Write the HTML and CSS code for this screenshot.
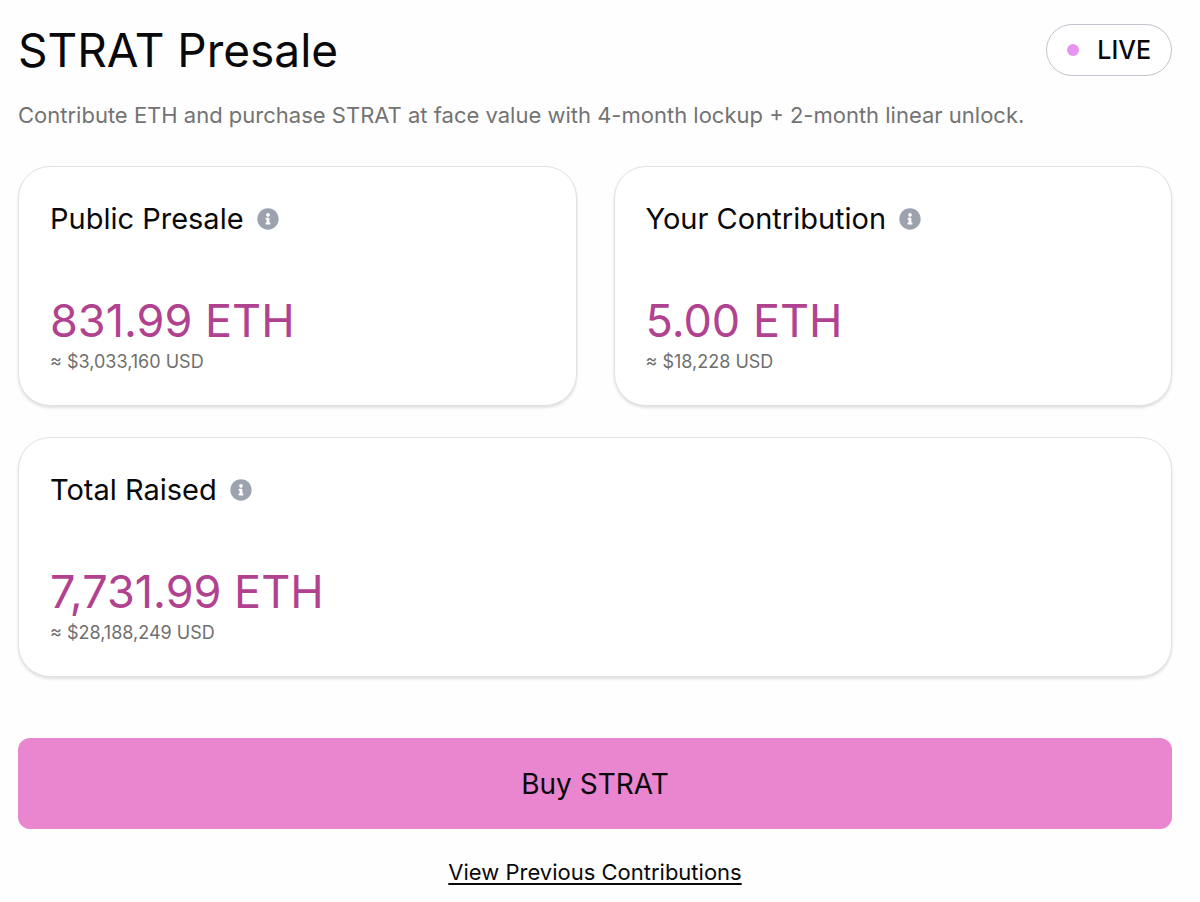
FILE: index.html
```html
<!DOCTYPE html>
<html lang="en">
<head>
  <meta charset="UTF-8" />
  <meta name="viewport" content="width=device-width, initial-scale=1" />
  <title>STRAT Presale</title>
  <link rel="stylesheet" href="styles.css">
</head>
<body>

  <svg class="sprite" aria-hidden="true">
    <symbol id="icon-info" viewBox="0 0 512 512">
      <path fill="currentColor" d="M256 8C119 8 8 119 8 256s111 248 248 248 248-111 248-248S393 8 256 8zm0 110c23.200 0 42 18.800 42 42s-18.800 42-42 42-42-18.800-42-42 18.800-42 42-42zm56 254c0 6.600-5.400 12-12 12h-88c-6.600 0-12-5.400-12-12v-24c0-6.600 5.400-12 12-12h12v-64h-12c-6.600 0-12-5.400-12-12v-24c0-6.600 5.400-12 12-12h64c6.600 0 12 5.400 12 12v100h12c6.600 0 12 5.400 12 12v24z"/>
    </symbol>
  </svg>

  <main class="presale">
    <header class="presale-header">
      <h1>STRAT Presale</h1>
      <span class="status"><span class="status-dot"></span>LIVE</span>
    </header>

    <p class="description">Contribute ETH and purchase STRAT at face value with 4-month lockup + 2-month linear unlock.</p>

    <div class="cards">
      <section class="card">
        <h2>Public Presale <svg class="info" role="img" aria-label="Info"><use href="#icon-info"/></svg></h2>
        <p class="amount">831.99 ETH</p>
        <p class="usd">≈ $3,033,160 USD</p>
      </section>

      <section class="card">
        <h2>Your Contribution <svg class="info" role="img" aria-label="Info"><use href="#icon-info"/></svg></h2>
        <p class="amount">5.00 ETH</p>
        <p class="usd">≈ $18,228 USD</p>
      </section>

      <section class="card card-wide">
        <h2>Total Raised <svg class="info" role="img" aria-label="Info"><use href="#icon-info"/></svg></h2>
        <p class="amount">7,731.99 ETH</p>
        <p class="usd">≈ $28,188,249 USD</p>
      </section>
    </div>

    <button type="button" class="buy-btn">Buy STRAT</button>
    <a href="#" class="history-link">View Previous Contributions</a>
  </main>

</body>
</html>
```

FILE: styles.css
```css
* {
  margin: 0;
  padding: 0;
  box-sizing: border-box;
}

body {
  background: #fefefe;
  color: #09090b;
  font-family: "Inter", sans-serif;
}

.sprite {
  display: none;
}

.presale {
  display: flex;
  flex-direction: column;
  padding: 24px 28px 12px 18px;
}

.presale-header {
  display: flex;
  justify-content: space-between;
  align-items: center;
}

h1 {
  font-size: 46px;
  line-height: 52px;
  font-weight: 400;
}

.status {
  display: flex;
  align-items: center;
  gap: 18px;
  height: 52px;
  padding: 0 20px;
  border: 1px solid #c4c3ce;
  border-radius: 26px;
  background: #fff;
  font-size: 25px;
  font-weight: 500;
}

.status-dot {
  width: 12px;
  height: 12px;
  border-radius: 50%;
  background: #e693f2;
}

.description {
  margin-top: 24px;
  color: #737373;
  font-size: 22px;
  line-height: 30px;
}

.cards {
  display: grid;
  grid-template-columns: 1fr 1fr;
  gap: 31px 37px;
  margin-top: 36px;
}

.card {
  padding: 34px 31px 28px;
  border: 1px solid #e2e2e4;
  border-radius: 32px;
  background: #fff;
  box-shadow: 0 2px 3px rgba(0, 0, 0, 0.12);
}

.card-wide {
  grid-column: 1 / -1;
}

h2 {
  display: flex;
  align-items: center;
  gap: 13px;
  font-size: 29px;
  line-height: 36px;
  font-weight: 400;
}

.info {
  width: 22px;
  height: 22px;
  color: #9ca3af;
}

.amount {
  margin-top: 58px;
  color: #b0428f;
  font-size: 45px;
  line-height: 52px;
}

.usd {
  color: #6f6f6f;
  font-size: 18px;
  line-height: 30px;
}

.buy-btn {
  margin-top: 61px;
  height: 91px;
  border: none;
  border-radius: 12px;
  background: #ea86cf;
  color: #09090b;
  font-family: inherit;
  font-size: 28px;
  cursor: pointer;
}

.buy-btn:hover {
  background: #e574c6;
}

.history-link {
  align-self: center;
  margin-top: 28px;
  color: #09090b;
  font-size: 22px;
  line-height: 30px;
  text-underline-offset: 3px;
}
```
